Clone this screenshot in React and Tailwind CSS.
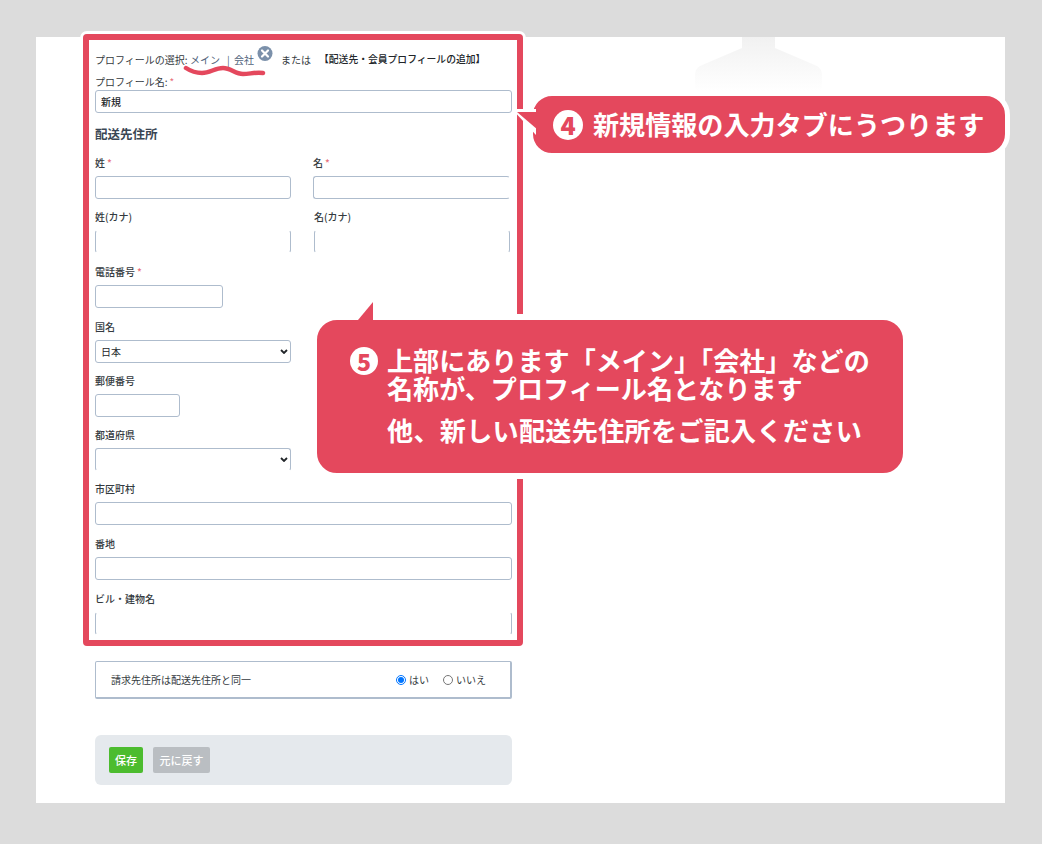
function Req() {
  return <span className="text-[#e8707a] ml-[2px]">*</span>;
}

function Label({ children, req }) {
  return (
    <div className="h-[22px] leading-[18px] text-[10px] font-medium text-[#343a40]">
      {children}
      {req && <Req />}
    </div>
  );
}

const inputCls = "block h-[23px] rounded-[3px] border border-[#aebccd] bg-white";

function Field({ label, req, className = "", inputClass = "w-full" }) {
  return (
    <div className={className}>
      <Label req={req}>{label}</Label>
      <input className={`${inputCls} ${inputClass}`} />
    </div>
  );
}

function Select({ children, className = "" }) {
  return (
    <div className="relative w-[196px]">
      <select className={`${inputCls} h-[22px] w-full appearance-none pl-[5px] text-[10px] text-[#212529] ${className}`}>
        {children}
      </select>
      <svg className="pointer-events-none absolute left-[185px] top-[9px]" width="8" height="5" viewBox="0 0 8 5">
        <path d="M1 1L4 4L7 1" fill="none" stroke="#212529" strokeWidth="1.8" />
      </svg>
    </div>
  );
}

function Badge({ n, size }) {
  return (
    <span
      className={`flex shrink-0 items-center justify-center rounded-full bg-white font-black text-[#e4485d] ${size}`}
    >
      {n}
    </span>
  );
}

export default function App() {
  return (
    <div className="relative h-[844px] w-[1042px] overflow-hidden bg-[#dcdcdc] pt-[37px] pl-[36px] font-['Noto_Sans_CJK_JP','Noto_Sans',sans-serif]">
      <div className="relative h-[766px] w-[969px] bg-white pl-[59px] pt-[13px]">
        <svg className="absolute left-[659px] top-0" width="127" height="54" viewBox="0 0 127 54">
          <defs>
            <linearGradient id="ghost" x1="0" y1="0" x2="0" y2="1">
              <stop offset="0" stopColor="#f1f1f1" />
              <stop offset="1" stopColor="#ffffff" />
            </linearGradient>
          </defs>
          <path d="M47 0H80V11L122 29Q127 32 127 38V54H0V38Q0 32 5 29L47 11Z" fill="url(#ghost)" />
        </svg>

        <form className="relative w-[417px]">
          <div className="flex h-[18px] items-center whitespace-nowrap text-[10px] text-[#343a40]">
            <span className="w-[95px]">プロフィールの選択:</span>
            <span className="w-[37px] text-[#50627a]">メイン</span>
            <span className="w-[7px] text-[#50627a]">|</span>
            <span className="w-[47px] text-[#50627a]">会社</span>
            <span className="w-[38px]">または</span>
            <span className="text-[9.8px] font-medium text-[#212529]">【配送先・会員プロフィールの追加】</span>
          </div>

          <div className="mt-[5px]">
            <div className="h-[17px] leading-[18px] text-[10px] text-[#343a40]">
              プロフィール名:<Req />
            </div>
            <input
              defaultValue="新規"
              className={`${inputCls} w-full px-[5px] text-[10px] font-medium text-[#212529]`}
            />
          </div>

          <h3 className="mt-[12px] h-[18px] text-[12.5px] font-bold leading-[18px] text-[#3a4654]">配送先住所</h3>

          <div className="mt-[11px] grid grid-cols-[196px_197px] gap-x-[22px]">
            <Field label="姓" req />
            <Field label="名" req inputClass="w-full border-r-white" />
          </div>
          <div className="mt-[9px] grid grid-cols-[196px_196px] gap-x-[23px]">
            <Field label="姓(カナ)" inputClass="w-full border-y-white" />
            <Field label="名(カナ)" inputClass="w-full border-y-white" />
          </div>
          <Field label="電話番号" req className="mt-[10px]" inputClass="w-[128px]" />

          <div className="mt-[10px]">
            <Label>国名</Label>
            <Select>
              <option>日本</option>
            </Select>
          </div>

          <Field label="郵便番号" className="mt-[9px]" inputClass="w-[85px]" />

          <div className="mt-[9px]">
            <Label>都道府県</Label>
            <Select className="border-b-white">
              <option></option>
            </Select>
          </div>

          <Field label="市区町村" className="mt-[9px]" />
          <Field label="番地" className="mt-[10px]" />
          <Field label="ビル・建物名" className="mt-[10px]" inputClass="w-full border-y-white" />

          <div className="mt-[26px] flex h-[38px] items-center justify-between rounded-[2px] border-2 border-[#aebccd] border-t-[1px] border-l-[1px] pl-[15px] pr-[24px] text-[10px] text-[#343a40]">
            <span>請求先住所は配送先住所と同一</span>
            <div className="flex items-center">
              <label className="flex items-center gap-[3px]">
                <input type="radio" name="same" defaultChecked className="m-0 h-[10px] w-[10px]" />
                はい
              </label>
              <label className="ml-[14px] flex items-center gap-[3px]">
                <input type="radio" name="same" className="m-0 h-[10px] w-[10px]" />
                いいえ
              </label>
            </div>
          </div>

          <div className="mt-[36px] flex h-[50px] items-center gap-[10px] rounded-[6px] bg-[#e5e9ed] px-[14px]">
            <button type="button" className="h-[26px] w-[34px] rounded-[2px] bg-[#4cbc2f] text-[11px] font-medium text-white">
              保存
            </button>
            <button type="button" className="h-[26px] w-[57px] rounded-[2px] bg-[#babec2] text-[11px] font-medium text-white">
              元に戻す
            </button>
          </div>
        </form>
      </div>

      {/* annotation frame */}
      <div className="pointer-events-none absolute left-[83px] top-[34px] h-[612px] w-[440px] rounded-[4px] border-[6px] border-[#e4485d] shadow-[0_0_0_3px_#ffffff]" />

      {/* squiggle + close icon */}
      <svg className="absolute left-0 top-0" width="300" height="90" viewBox="0 0 300 90">
        <path d="M186 68C192 72 197 73 202 73C210 73 215 68 223 68C231 68 235 74 243 74C250 74 255 72 263 73" fill="none" stroke="#e4485d" strokeWidth="4.5" strokeLinecap="round" />
        <circle cx="265" cy="53.5" r="7.5" fill="#7b90aa" />
        <path d="M262 50.5L268 56.5M268 50.5L262 56.5" stroke="#fff" strokeWidth="2.2" strokeLinecap="round" />
      </svg>

      {/* callout 4 */}
      <div className="absolute left-[528px] top-[91px] flex h-[67px] w-[482px] items-center rounded-[24px] border-[5px] border-white bg-[#e4485d] pl-[20px]">
        <svg className="absolute left-[-21px] top-[11px]" width="26" height="30" viewBox="0 0 26 30">
          <path d="M0 2H24V28Z" fill="#fff" />
          <path d="M5 5H26V23Z" fill="#e4485d" />
        </svg>
        <Badge n="4" size="h-[30px] w-[30px] text-[25px] leading-none" />
        <span className="ml-[10px] whitespace-nowrap text-[26.1px] font-bold leading-none text-white">
          新規情報の入力タブにうつります
        </span>
      </div>

      {/* callout 5 */}
      <div className="absolute left-[311px] top-[314px] h-[165px] w-[598px] rounded-[26px] border-[6px] border-white bg-[#e4485d] pl-[33px] pt-[26px] text-white">
        <svg className="absolute left-[38px] top-[-21px]" width="20" height="24" viewBox="0 0 20 24">
          <path d="M3 21L18 3V21Z" fill="#e4485d" />
        </svg>
        <div className="flex">
          <Badge n="5" size="mt-[1px] h-[28px] w-[28px] text-[23px] leading-none" />
          <div className="ml-[9px] whitespace-nowrap text-[26.1px] font-bold leading-[28px]">
            <div>上部にあります「メイン」「会社」などの</div>
            <div>名称が、プロフィール名となります</div>
            <div className="mt-[14px] tracking-[0.3px]">他、新しい配送先住所をご記入ください</div>
          </div>
        </div>
      </div>
    </div>
  );
}
